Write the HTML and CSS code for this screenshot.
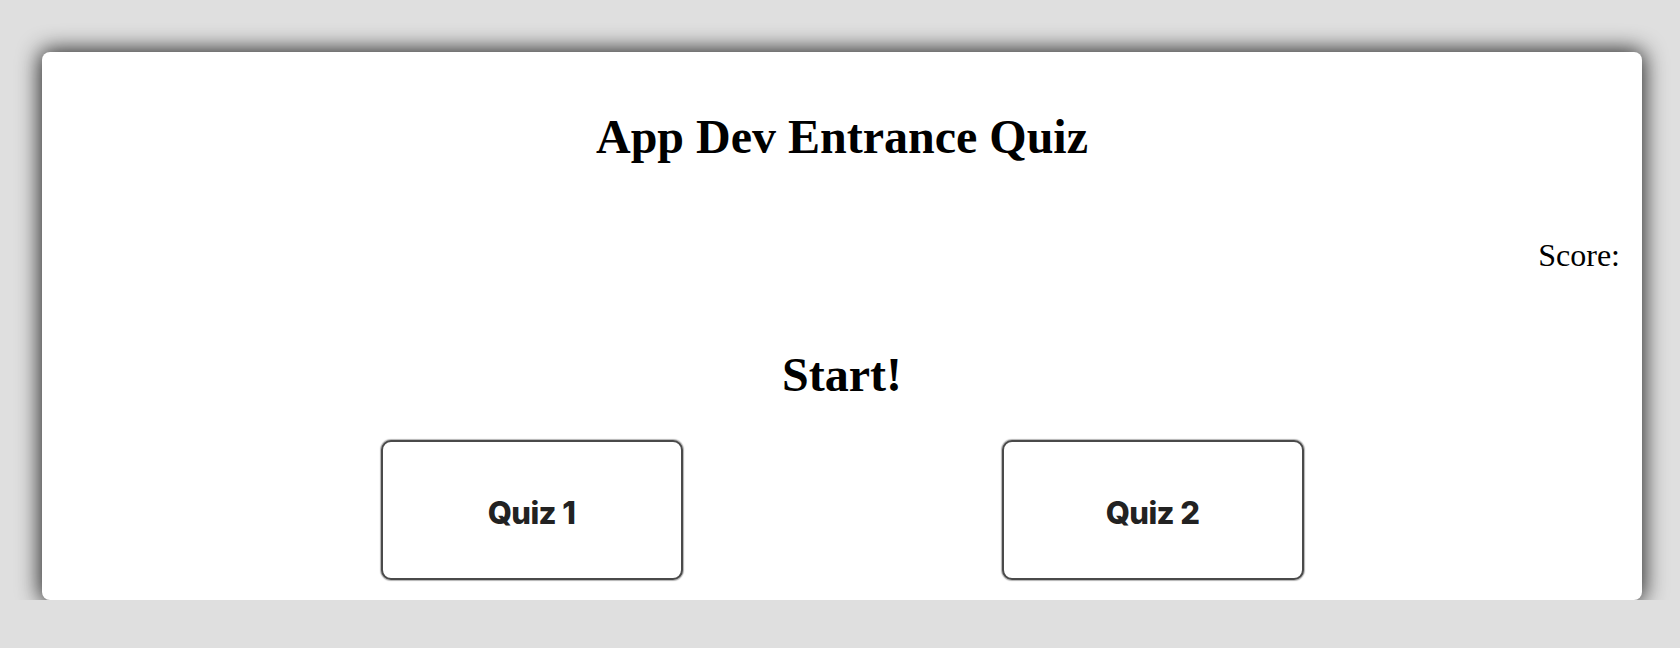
FILE: index.html
```html
<!DOCTYPE html>
<html lang="en">
<head>
<meta charset="utf-8">
<title>App Dev Entrance Quiz</title>
<link rel="stylesheet" href="styles.css">
</head>
<body>
<main class="card">
  <h1 class="title">App Dev Entrance Quiz</h1>
  <div class="score-row"><span class="score">Score:</span></div>
  <h2 class="start">Start!</h2>
  <div class="quiz-row">
    <button class="quiz-btn" type="button">Quiz 1</button>
    <button class="quiz-btn" type="button">Quiz 2</button>
  </div>
</main>
</body>
</html>
```

FILE: styles.css
```css
html, body {
  margin: 0;
  padding: 0;
  background: #dfdfdf;
}
body {
  font-family: "Liberation Serif", "Times New Roman", serif;
  color: #000;
  padding-top: 52px;
  padding-left: 42px;
}
.card {
  box-sizing: border-box;
  width: 1600px;
  height: 548px;
  background: #fff;
  border-radius: 8px;
  box-shadow: 0 0 22px 2px rgba(0, 0, 0, 0.85);
  padding: 57px 22px 20px 22px;
  display: flex;
  flex-direction: column;
}
.title {
  margin: 0;
  font-size: 48px;
  line-height: 55px;
  font-weight: bold;
  text-align: center;
}
.score-row {
  margin-top: 73px;
  display: flex;
  justify-content: flex-end;
}
.score {
  font-size: 32px;
  line-height: 37px;
}
.start {
  margin: 73px 0 0 0;
  font-size: 48px;
  line-height: 55px;
  font-weight: bold;
  text-align: center;
}
.quiz-row {
  margin-top: 38px;
  display: flex;
  justify-content: center;
  gap: 319px;
}
.quiz-btn {
  box-sizing: border-box;
  width: 302px;
  height: 140px;
  background: #fff;
  border: 2px solid #4a4a4a;
  border-radius: 10px;
  box-shadow: 0 0 1px 1px rgba(0, 0, 0, 0.3);
  font-family: Inter, "Liberation Sans", sans-serif;
  font-weight: 800;
  font-size: 31px;
  letter-spacing: -0.6px;
  color: #222;
  padding: 4px 0 0 0;
  cursor: pointer;
}
```
